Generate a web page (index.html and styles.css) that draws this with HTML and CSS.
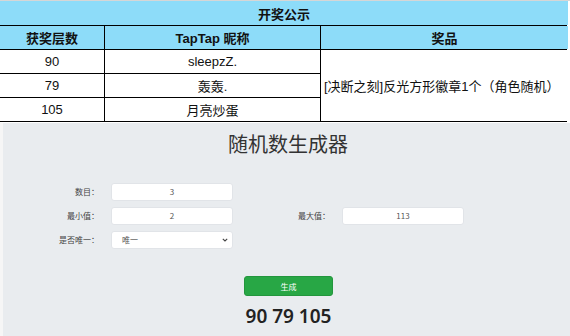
FILE: index.html
```html
<!DOCTYPE html>
<html lang="zh">
<head>
<meta charset="utf-8">
<title>开奖公示</title>
<link rel="stylesheet" href="styles.css">
</head>
<body>
<div class="sheet">
  <div class="grid">
    <div class="cell title">开奖公示</div>
    <div class="cell head">获奖层数</div>
    <div class="cell head">TapTap 昵称</div>
    <div class="cell head">奖品</div>
    <div class="cell">90</div>
    <div class="cell">sleepzZ.</div>
    <div class="cell prize">[决断之刻]反光方形徽章1个（角色随机）</div>
    <div class="cell">79</div>
    <div class="cell">轰轰.</div>
    <div class="cell">105</div>
    <div class="cell">月亮炒蛋</div>
  </div>
</div>
<div class="app">
  <div class="content">
    <h1 class="app-title">随机数生成器</h1>
    <div class="form">
      <label class="lbl">数目：</label>
      <div class="field">3</div>
      <span></span><span></span>
      <label class="lbl">最小值：</label>
      <div class="field">2</div>
      <label class="lbl">最大值：</label>
      <div class="field">113</div>
      <label class="lbl">是否唯一：</label>
      <div class="field select"><span>唯一</span>
        <svg class="chev" width="6" height="4" viewBox="0 0 6 4"><path d="M0.8 0.8 L3 3 L5.2 0.8" fill="none" stroke="#444" stroke-width="1.1"/></svg>
      </div>
    </div>
    <div class="actions"><button class="btn">生成</button></div>
    <div class="result">90 79 105</div>
  </div>
</div>
</body>
</html>
```
FILE: styles.css
```css
html, body {
  margin: 0;
  padding: 0;
  background: #ffffff;
  width: 570px;
  height: 336px;
  overflow: hidden;
}
body {
  font-family: "Liberation Sans", "Noto Sans CJK SC", sans-serif;
}
.sheet {
  border-top: 1px solid #d6d6d6;
}
.grid {
  display: grid;
  grid-template-columns: 104px 215px 247px;
  grid-template-rows: 24px 23px 23px 23px 23px;
  gap: 1px;
  width: 566px;
  padding: 0 1px 1px 0;
  background: #000;
}
.cell {
  background: #fff;
  display: flex;
  align-items: center;
  justify-content: center;
  font-size: 13px;
  color: #111;
}
.title {
  grid-column: 1 / span 3;
  background: #8ddcf9;
  font-weight: bold;
}
.head {
  background: #8ddcf9;
  font-weight: bold;
}
.prize {
  grid-column: 3;
  grid-row: 3 / span 3;
  justify-content: flex-start;
  padding-left: 3px;
}
.app {
  margin-top: 1px;
  height: 213px;
  display: flex;
  background: #e9ecef;
  border-left: 3px solid #f6f6f6;
}
.content {
  flex: 1;
  display: flex;
  flex-direction: column;
  align-items: center;
  font-family: "Noto Sans CJK SC", "Noto Sans", sans-serif;
}
.app-title {
  margin: 6px 0 0 3px;
  font-size: 20px;
  line-height: 30px;
  font-weight: normal;
  color: #333;
}
.form {
  align-self: flex-start;
  margin-top: 24px;
  margin-left: -4px;
  display: grid;
  grid-template-columns: 100px 122px 85px 122px;
  grid-auto-rows: 18px;
  column-gap: 12px;
  row-gap: 6px;
}
.lbl {
  font-size: 8px;
  color: #444;
  text-align: right;
  line-height: 18px;
}
.field {
  background: #fff;
  border: 1px solid #e1e4e8;
  border-radius: 3px;
  box-sizing: border-box;
  font-size: 8px;
  color: #555;
  line-height: 16px;
  text-align: center;
}
.select {
  display: flex;
  justify-content: space-between;
  align-items: center;
  padding: 0 4px 0 10px;
  text-align: left;
}
.chev {
  display: block;
}
.actions {
  margin-top: 27px;
}
.btn {
  display: block;
  width: 89px;
  height: 20px;
  background: #28a745;
  border: 1px solid #23963d;
  border-radius: 3px;
  color: #fff;
  font-family: "Noto Sans CJK SC", sans-serif;
  font-size: 8px;
  padding: 0;
  margin-left: 4px;
}
.result {
  margin: 7px 0 0 4px;
  font-family: "Noto Sans", sans-serif;
  font-size: 19px;
  line-height: 26px;
  font-weight: 600;
  color: #222;
}
```
